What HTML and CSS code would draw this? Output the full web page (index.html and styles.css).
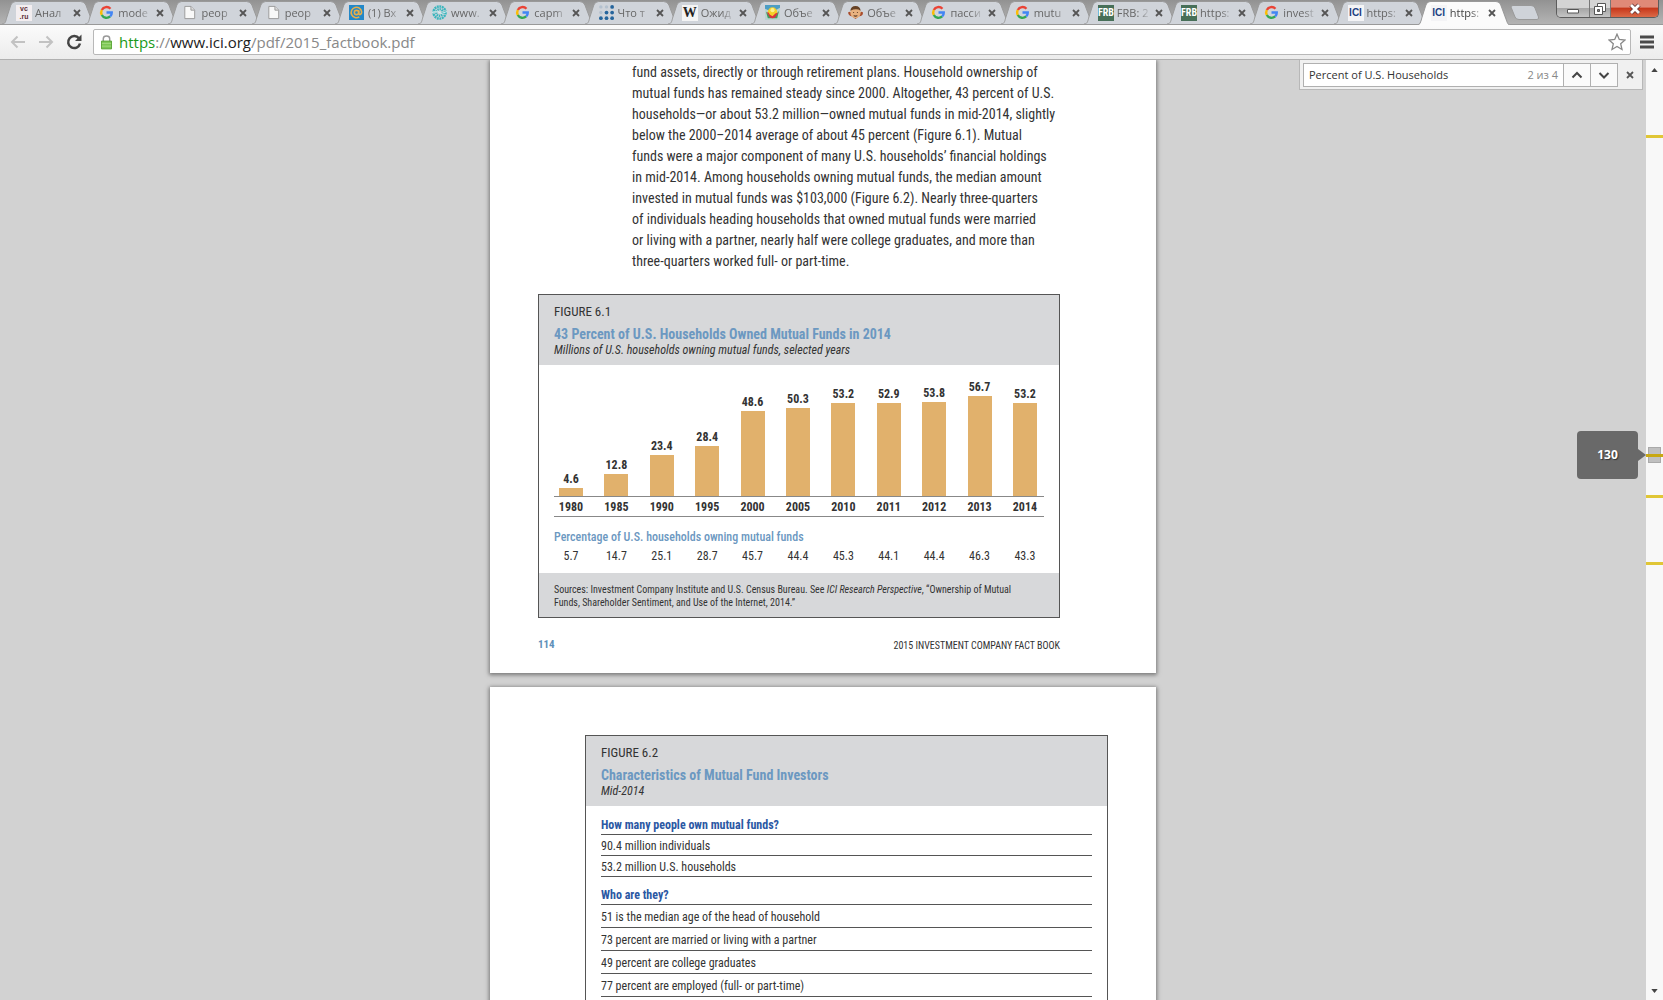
FILE: index.html
```html
<!DOCTYPE html>
<html lang="en">
<head>
<meta charset="utf-8">
<title>2015_factbook.pdf</title>
<link rel="stylesheet" href="styles.css">
</head>
<body>
<svg class="defs" aria-hidden="true">
  <symbol id="shape" viewBox="0 0 95 24" preserveAspectRatio="none"><path d="M0 24C4 24 4 20 5 17L9 5Q10.500 1.500 14 1.500H80Q84 1.500 85.500 5L91 19Q92.500 24 95 24"/></symbol>
  <symbol id="close" viewBox="0 0 10 10"><path d="M2 2L8 8M8 2L2 8" stroke="#555" stroke-width="1.800"/></symbol>
  <symbol id="google" viewBox="0 0 16 16"><g fill="none" stroke-width="2.600"><path d="M3 5.300A5.700 5.700 0 0 1 12.200 4" stroke="#ea4335"/><path d="M3 5.300A5.700 5.700 0 0 0 3 10.700" stroke="#fbbc05"/><path d="M3 10.700A5.700 5.700 0 0 0 11.900 12.200" stroke="#34a853"/><path d="M11.900 12.200Q13.700 10.500 13.600 8H8" stroke="#4285f4"/></g></symbol>
  <symbol id="file" viewBox="0 0 16 16"><path d="M3 1.500H9.500L13.500 5.500V14.500H3Z" fill="#f8f8f8" stroke="#999"/><path d="M9.500 1.500V5.500H13.500" fill="#ddd" stroke="#999"/></symbol>
  <symbol id="mail" viewBox="0 0 16 16"><path d="M0 0H16V16H0Z" fill="#2388c8"/><g fill="none" stroke="#e8ae48" stroke-width="1.700"><circle cx="8" cy="8" r="2.300"/><path d="M10.400 5.500V9Q10.700 10.500 12 10.200Q13.600 9.500 13.500 7.500A5.600 5.600 0 1 0 11 12.700"/></g></symbol>
  <symbol id="burst" viewBox="0 0 16 16"><g fill="none" stroke="#38b5bd"><circle cx="8" cy="8" r="6.500" stroke-width="2.600" stroke-dasharray="2 .7"/><circle cx="8" cy="8" r="3.500" stroke-width="2.400" stroke-dasharray="1.500 .8"/></g><path d="M0 8L6 7L10 9L16 7" stroke="#d8eef0" fill="none"/></symbol>
  <symbol id="dots" viewBox="0 0 16 16"><g fill="#b4c1ce"><circle cx="2" cy="2" r="1.800"/><circle cx="8" cy="2" r="1.800"/><circle cx="2" cy="8" r="1.800"/></g><g fill="#26659c"><circle cx="14" cy="2" r="2"/><circle cx="8" cy="8" r="2"/><circle cx="14" cy="8" r="2"/><circle cx="2" cy="14" r="2"/><circle cx="8" cy="14" r="2"/><circle cx="14" cy="14" r="2"/></g></symbol>
  <symbol id="ball" viewBox="0 0 16 16"><path d="M0 0H16V16H0Z" fill="#4c9dc4"/><path d="M0 4Q8 9 16 3V16H0Z" fill="#b9d3cf"/><path d="M1 7Q6 13 8 13T15 6L13 14H3Z" fill="#3f9d5c"/><circle cx="8" cy="7.500" r="5" fill="#f4cf27"/><path d="M2 8Q4 7 5 10L8 12L11 9L14 8L11 13Q8 15 5 13Z" fill="#d8343a"/><circle cx="8" cy="5.500" r="2.200" fill="#fbf08a"/></symbol>
  <symbol id="face" viewBox="0 0 16 16"><path d="M0 8Q3 6 4 9H12Q14 6 16 8Q16 12 12 12L8 15L4 12Q1 12 0 8" fill="#a94c2b"/><ellipse cx="8" cy="8" rx="5.500" ry="6" fill="#e8b27f"/><path d="M2.500 6Q3 1 8 1T13.500 6Q9 3 2.500 6" fill="#654125"/><path d="M5.500 8H6.500M9.500 8H10.500M6 11.500Q8 12.500 10 11.500" stroke="#573420"/></symbol>
</svg>

<header class="browser">
  <div class="strip">
    <div class="tabs" role="tablist">
      <div class="tab"><svg class="shape"><use href="#shape"/></svg><span class="fav vc"><span>vc</span><span>.ru</span></span><button class="label">Анал</button><button class="close" aria-label="Close"><svg><use href="#close"/></svg></button></div>
      <div class="tab"><svg class="shape"><use href="#shape"/></svg><svg class="fav"><use href="#google"/></svg><button class="label">mode</button><button class="close" aria-label="Close"><svg><use href="#close"/></svg></button></div>
      <div class="tab"><svg class="shape"><use href="#shape"/></svg><svg class="fav"><use href="#file"/></svg><button class="label">peop</button><button class="close" aria-label="Close"><svg><use href="#close"/></svg></button></div>
      <div class="tab"><svg class="shape"><use href="#shape"/></svg><svg class="fav"><use href="#file"/></svg><button class="label">peop</button><button class="close" aria-label="Close"><svg><use href="#close"/></svg></button></div>
      <div class="tab"><svg class="shape"><use href="#shape"/></svg><svg class="fav"><use href="#mail"/></svg><button class="label">(1) Вх</button><button class="close" aria-label="Close"><svg><use href="#close"/></svg></button></div>
      <div class="tab"><svg class="shape"><use href="#shape"/></svg><svg class="fav"><use href="#burst"/></svg><button class="label">www.</button><button class="close" aria-label="Close"><svg><use href="#close"/></svg></button></div>
      <div class="tab"><svg class="shape"><use href="#shape"/></svg><svg class="fav"><use href="#google"/></svg><button class="label">capm</button><button class="close" aria-label="Close"><svg><use href="#close"/></svg></button></div>
      <div class="tab"><svg class="shape"><use href="#shape"/></svg><svg class="fav"><use href="#dots"/></svg><button class="label">Что т</button><button class="close" aria-label="Close"><svg><use href="#close"/></svg></button></div>
      <div class="tab"><svg class="shape"><use href="#shape"/></svg><span class="fav wiki">W</span><button class="label">Ожид</button><button class="close" aria-label="Close"><svg><use href="#close"/></svg></button></div>
      <div class="tab"><svg class="shape"><use href="#shape"/></svg><svg class="fav"><use href="#ball"/></svg><button class="label">Объе</button><button class="close" aria-label="Close"><svg><use href="#close"/></svg></button></div>
      <div class="tab"><svg class="shape"><use href="#shape"/></svg><svg class="fav"><use href="#face"/></svg><button class="label">Объе</button><button class="close" aria-label="Close"><svg><use href="#close"/></svg></button></div>
      <div class="tab"><svg class="shape"><use href="#shape"/></svg><svg class="fav"><use href="#google"/></svg><button class="label">пасси</button><button class="close" aria-label="Close"><svg><use href="#close"/></svg></button></div>
      <div class="tab"><svg class="shape"><use href="#shape"/></svg><svg class="fav"><use href="#google"/></svg><button class="label">mutu</button><button class="close" aria-label="Close"><svg><use href="#close"/></svg></button></div>
      <div class="tab"><svg class="shape"><use href="#shape"/></svg><span class="fav frb">FRB</span><button class="label">FRB: 2</button><button class="close" aria-label="Close"><svg><use href="#close"/></svg></button></div>
      <div class="tab"><svg class="shape"><use href="#shape"/></svg><span class="fav frb">FRB</span><button class="label">https:</button><button class="close" aria-label="Close"><svg><use href="#close"/></svg></button></div>
      <div class="tab"><svg class="shape"><use href="#shape"/></svg><svg class="fav"><use href="#google"/></svg><button class="label">invest</button><button class="close" aria-label="Close"><svg><use href="#close"/></svg></button></div>
      <div class="tab"><svg class="shape"><use href="#shape"/></svg><span class="fav ici">ICI</span><button class="label">https:</button><button class="close" aria-label="Close"><svg><use href="#close"/></svg></button></div>
      <div class="tab active"><svg class="shape"><use href="#shape"/></svg><span class="fav ici">ICI</span><button class="label">https:</button><button class="close" aria-label="Close"><svg><use href="#close"/></svg></button></div>
    </div>
    <button class="newtab" aria-label="New tab"><svg viewBox="0 0 30 16"><path d="M1 2Q1 .5 3 .5H21Q24 .5 25 3L28.500 12Q29 14.500 27 14.500H9Q6 14.500 5 12Z" fill="#cfd3d9" stroke="#999"/></svg></button>
    <div class="window">
      <button class="min" aria-label="Minimize"><svg viewBox="0 0 14 14"><path d="M1.500 7.500H12.500V11H1.500Z" fill="#fff" stroke="#555"/></svg></button>
      <button class="max" aria-label="Restore"><svg viewBox="0 0 14 14"><path d="M4.500 1.500H12.500V9.500H4.500Z" fill="#fff" stroke="#555"/><path d="M1.500 4.500H9.500V12.500H1.500Z" fill="#fff" stroke="#555"/><path d="M4.500 7.500H6.500V9.500H4.500Z" fill="#888" stroke="#555"/></svg></button>
      <button class="exit" aria-label="Close window"><svg viewBox="0 0 14 14"><path d="M3 3L11 11M11 3L3 11" stroke="#633" stroke-width="4.500"/><path d="M3 3L11 11M11 3L3 11" stroke="#fff" stroke-width="2.800"/></svg></button>
    </div>
  </div>
  <div class="toolbar">
    <button class="nav" aria-label="Back"><svg viewBox="0 0 18 18"><path d="M16 9H3M8.500 3.500L3 9L8.500 14.500" fill="none" stroke="#c2c2c2" stroke-width="2"/></svg></button>
    <button class="nav" aria-label="Forward"><svg viewBox="0 0 18 18"><path d="M2 9H15M9.500 3.500L15 9L9.500 14.500" fill="none" stroke="#c2c2c2" stroke-width="2"/></svg></button>
    <button class="nav" aria-label="Reload"><svg viewBox="0 0 18 18"><path d="M14 5.500A6 6 0 1 0 15 10.500" fill="none" stroke="#444" stroke-width="2.500"/><path d="M16.500 1.500V8H10Z" fill="#444"/></svg></button>
    <div class="omnibox">
      <svg class="lock" viewBox="0 0 12 16"><path d="M2.500 8V4.500Q2.500 1.500 6 1.500T9.500 4.500V8" fill="none" stroke="#999" stroke-width="1.600"/><path d="M.5 7H11.500V15.500H.5Z" fill="#7cc653" stroke="#55a030"/><path d="M1 9.500H11M1 12.500H11" stroke="#a5dc83"/></svg>
      <a class="url" href="https://www.ici.org/pdf/2015_factbook.pdf"><span class="secure">https</span>://<span class="host">www.ici.org</span>/pdf/2015_factbook.pdf</a>
      <button class="star" aria-label="Bookmark"><svg viewBox="0 0 18 18"><path d="M9 1.200L11.300 6.500L17 7L12.700 10.800L14 16.500L9 13.500L4 16.500L5.300 10.800L1 7L6.700 6.500Z" fill="#fff" stroke="#888" stroke-width="1.300"/></svg></button>
    </div>
    <button class="menu" aria-label="Menu"><svg viewBox="0 0 14 14"><path d="M0 2H14M0 7H14M0 12H14" stroke="#4a4a4a" stroke-width="3"/></svg></button>
  </div>
</header>

<main class="viewer">
  <div class="document">
    <section class="page first">
      <p class="prose">fund assets, directly or through retirement plans. Household ownership of<br>mutual funds has remained steady since 2000. Altogether, 43 percent of U.S.<br>households—or about 53.2 million—owned mutual funds in mid-2014, slightly<br>below the 2000–2014 average of about 45 percent (Figure 6.1). Mutual<br>funds were a major component of many U.S. households’ financial holdings<br>in mid-2014. Among households owning mutual funds, the median amount<br>invested in mutual funds was $103,000 (Figure 6.2). Nearly three-quarters<br>of individuals heading households that owned mutual funds were married<br>or living with a partner, nearly half were college graduates, and more than<br>three-quarters worked full- or part-time.</p>
      <figure class="figure">
        <figcaption class="caption">
          <div class="number">FIGURE 6.1</div>
          <h2>43 Percent of U.S. Households Owned Mutual Funds in 2014</h2>
          <div class="subtitle">Millions of U.S. households owning mutual funds, selected years</div>
        </figcaption>
        <div class="chart">
          <div class="cols bars">
            <div class="col">4.6<i style="height:8px"></i></div>
            <div class="col">12.8<i style="height:22px"></i></div>
            <div class="col">23.4<i style="height:41px"></i></div>
            <div class="col">28.4<i style="height:50px"></i></div>
            <div class="col">48.6<i style="height:85px"></i></div>
            <div class="col">50.3<i style="height:88px"></i></div>
            <div class="col">53.2<i style="height:93px"></i></div>
            <div class="col">52.9<i style="height:93px"></i></div>
            <div class="col">53.8<i style="height:94px"></i></div>
            <div class="col">56.7<i style="height:100px"></i></div>
            <div class="col">53.2<i style="height:93px"></i></div>
          </div>
          <div class="cols years"><span class="col">1980</span><span class="col">1985</span><span class="col">1990</span><span class="col">1995</span><span class="col">2000</span><span class="col">2005</span><span class="col">2010</span><span class="col">2011</span><span class="col">2012</span><span class="col">2013</span><span class="col">2014</span></div>
          <h3>Percentage of U.S. households owning mutual funds</h3>
          <div class="cols shares"><span class="col">5.7</span><span class="col">14.7</span><span class="col">25.1</span><span class="col">28.7</span><span class="col">45.7</span><span class="col">44.4</span><span class="col">45.3</span><span class="col">44.1</span><span class="col">44.4</span><span class="col">46.3</span><span class="col">43.3</span></div>
        </div>
        <p class="sources">Sources: Investment Company Institute and U.S. Census Bureau. See <em>ICI Research Perspective</em>, “Ownership of Mutual<br>Funds, Shareholder Sentiment, and Use of the Internet, 2014.”</p>
      </figure>
      <footer class="folio"><b>114</b><span>2015 INVESTMENT COMPANY FACT BOOK</span></footer>
    </section>
    <section class="page second">
      <figure class="figure">
        <figcaption class="caption">
          <div class="number">FIGURE 6.2</div>
          <h2>Characteristics of Mutual Fund Investors</h2>
          <div class="subtitle">Mid-2014</div>
        </figcaption>
        <div class="facts">
          <h3>How many people own mutual funds?</h3>
          <ul class="tight"><li>90.4 million individuals</li><li>53.2 million U.S. households</li></ul>
          <h3>Who are they?</h3>
          <ul><li>51 is the median age of the head of household</li><li>73 percent are married or living with a partner</li><li>49 percent are college graduates</li><li>77 percent are employed (full- or part-time)</li></ul>
        </div>
      </figure>
    </section>
  </div>

  <div class="scrollbar">
    <svg class="up" viewBox="0 0 8 5"><path d="M0 5L4 0L8 5Z"/></svg>
    <span class="thumb"></span>
    <span class="mark m1"></span><span class="mark m2"></span><span class="mark m3"></span><span class="mark m4"></span>
    <svg class="down" viewBox="0 0 8 5"><path d="M0 0L4 5L8 0Z"/></svg>
  </div>
  <div class="bubble">130</div>
  <form class="find">
    <div class="field"><input type="text" aria-label="Find in page" value="Percent of U.S. Households"><span>2 из 4</span></div>
    <button type="button" class="step" aria-label="Previous"><svg viewBox="0 0 12 12"><path d="M1.500 8.500L6 4L10.500 8.500"/></svg></button>
    <button type="button" class="step" aria-label="Next"><svg viewBox="0 0 12 12"><path d="M1.500 4L6 8.500L10.500 4"/></svg></button>
    <button type="button" class="dismiss" aria-label="Close find bar"><svg><use href="#close"/></svg></button>
  </form>
</main>
</body>
</html>
```

FILE: styles.css
```css
* { box-sizing: border-box; }
html, body { height: 100%; }
body {
  margin: 0;
  display: flex;
  flex-direction: column;
  overflow: hidden;
  background: #d2d2d2;
  color: #333;
  font-family: "Roboto Condensed", Roboto, "Liberation Sans", sans-serif;
}
button { padding: 0; border: 0; background: none; font: inherit; color: inherit; }
svg { display: block; }
.defs { position: absolute; width: 0; height: 0; }
h2, h3, p, figure, ul { margin: 0; padding: 0; }

/* tab strip */
.browser { flex: none; font-family: "Open Sans", "Noto Sans", sans-serif; }
.strip {
  display: flex;
  height: 25px;
  padding-left: 2px;
  background: linear-gradient(#929292, #b4b4b4);
  border-bottom: 1px solid #999;
}
.tabs { display: flex; flex: 0 1 1498px; min-width: 0; }
.tab {
  position: relative;
  flex: 1 1 0;
  min-width: 0;
  height: 25px;
  display: flex;
  align-items: center;
  gap: 3px;
  padding-left: 14px;
  font-size: 11px;
  color: #666;
}
.shape {
  position: absolute;
  left: 0;
  top: 0;
  width: calc(100% + 10px);
  height: 24px;
  fill: #d0d4da;
  stroke: #999;
}
.active { z-index: 1; color: #444; }
.active .shape { fill: #fbfbfb; height: 25px; }
.fav { position: relative; flex: none; width: 16px; height: 16px; }
svg.fav { width: 15px; height: 15px; margin-right: 1px; }
.label {
  position: relative;
  flex: 0 0 34px;
  text-align: left;
  white-space: nowrap;
  line-height: 20px;
  mask-image: linear-gradient(90deg, #000 60%, transparent);
}
.close { position: relative; flex: none; }
.close svg, .dismiss svg { width: 10px; height: 10px; }
.vc { display: flex; flex-direction: column; align-items: center; background: #f3eef0; color: #5c3038; font: 700 7px/8px "Liberation Sans", sans-serif; }
.wiki { background: #f4f4f4; color: #222; font: 700 14px/16px "Liberation Serif", serif; text-align: center; }
.frb { background: #476f58; color: #fff; font: 700 10px/15px "Roboto Condensed", sans-serif; text-align: center; }
.ici { background: #f4f4f6; color: #1d3f82; font: 700 10px/16px "Liberation Sans", sans-serif; text-align: center; }
.newtab { width: 30px; height: 16px; margin: 5px 0 0 10px; }
.newtab svg { width: 30px; height: 16px; }
.window {
  display: flex;
  height: 18px;
  margin: 0 4px 0 auto;
  border: 1px solid #5c5c5c;
  border-top: 0;
  border-radius: 0 0 5px 5px;
  overflow: hidden;
}
.window button { display: grid; place-items: center; background: linear-gradient(#d4d4d4 45%, #a6a6a6 50%, #c4c4c4); border-right: 1px solid #777; }
.window svg { width: 14px; height: 14px; }
.window .min { width: 33px; }
.window .max { width: 21px; }
.window .exit { width: 47px; border: 0; background: linear-gradient(#e08a78 40%, #c7391c 50%, #dc6a48); }

/* toolbar */
.toolbar {
  display: flex;
  align-items: center;
  height: 35px;
  padding: 0 9px;
  background: linear-gradient(#fbfbfb, #ececec);
  border-bottom: 1px solid #b0b0b0;
}
.nav { width: 18px; height: 18px; margin-right: 10px; }
.omnibox {
  flex: 1;
  display: flex;
  align-items: center;
  height: 26px;
  margin: 0 9px 0 0;
  padding: 0 4px 0 7px;
  background: #fff;
  border: 1px solid #b8b8b8;
  border-radius: 2px;
}
.lock { width: 11px; height: 16px; margin-right: 7px; }
.url { flex: 1; font-size: 15px; line-height: 20px; color: #888; text-decoration: none; }
.secure { color: #1a9a1a; }
.host { color: #222; }
.star, .star svg { width: 18px; height: 18px; }
.menu { width: 14px; height: 14px; }

/* document */
.viewer { position: relative; flex: 1; min-height: 0; display: flex; overflow: hidden; }
.document { flex: 1; display: flex; flex-direction: column; align-items: center; gap: 14px; overflow: hidden; }
.page { flex: none; width: 666px; background: #fff; box-shadow: 0 1px 4px 1px #777; }
.first { padding: 0 96px 17px 48px; }
.second { padding: 48px 48px 48px 95px; }
.prose { padding: 2px 0 22px 94px; font-size: 14px; line-height: 21px; white-space: nowrap; }
.figure { border: 1px solid #555; }
.caption { height: 70px; padding: 8px 15px 0; background: #d7d8da; }
.number { font-size: 13px; line-height: 18px; }
h2 { padding-top: 3px; font-size: 14px; line-height: 20px; color: #6c98c1; white-space: nowrap; }
.subtitle { font-size: 12px; line-height: 13px; font-style: italic; white-space: nowrap; }
.chart { padding: 0 15px; }
.cols { display: flex; justify-content: space-between; padding-right: 2px; }
.col { flex: 0 0 34px; text-align: center; font-size: 12px; line-height: 18px; }
.bars { height: 132px; align-items: flex-end; font-weight: 700; border-bottom: 1px solid #888; }
.bars i { display: block; width: 24px; margin: 0 auto; background: #e1b16c; }
.years { height: 20px; padding-top: 1px; font-weight: 700; border-bottom: 1px solid #888; }
.chart h3 { padding-top: 11px; font-size: 12px; font-weight: 500; line-height: 18px; color: #6c98c1; }
.shares { height: 27px; padding-top: 1px; }
.sources { height: 44px; padding: 10px 15px 0; background: #d7d8da; font-size: 10px; line-height: 13px; white-space: nowrap; }
.folio { display: flex; justify-content: space-between; padding-top: 18px; font-size: 10px; line-height: 20px; }
.folio b { font-size: 11px; line-height: 18px; color: #5f8fb9; }
.facts { padding: 8px 15px 24px; font-size: 12px; }
.facts h3, .facts li { padding-top: 2px; border-bottom: 1px solid #555; }
.facts h3 { font-size: 12px; line-height: 18px; color: #2b58a3; }
.facts ul { list-style: none; }
.facts li { line-height: 20px; }
.facts .tight { padding-bottom: 7px; }
.facts .tight li { line-height: 18px; }

/* overlays */
.scrollbar { position: relative; flex: 0 0 17px; background: #f8f8f8; }
.scrollbar svg { position: absolute; left: 5px; width: 7px; height: 4px; fill: #444; }
.scrollbar .up { top: 8px; }
.scrollbar .down { bottom: 7px; }
.thumb { position: absolute; left: 2px; top: 387px; width: 13px; height: 16px; background: #c0c0c0; border: 1px solid #aaa; }
.mark { position: absolute; left: 0; width: 17px; height: 3px; background: #e0c636; }
.m1 { top: 75px; }
.m2 { top: 394px; background: #c8a812; }
.m3 { top: 435px; }
.m4 { top: 502px; }
.bubble {
  position: absolute;
  right: 25px;
  top: 371px;
  width: 61px;
  height: 48px;
  border-radius: 4px;
  background: #696969;
  color: #fff;
  font: 700 12px/47px "Open Sans", sans-serif;
  text-align: center;
  text-shadow: 1px 1px 1px #333;
}
.bubble::after { content: ""; position: absolute; left: 61px; top: 18px; border: 6px solid transparent; border-left: 8px solid #696969; border-right: 0; }
.find {
  position: absolute;
  right: 20px;
  top: 0;
  display: flex;
  align-items: center;
  height: 30px;
  padding: 0 7px 0 3px;
  background: #f0f0f0;
  border: 1px solid #b8b8b8;
  border-top: 0;
  font: 11px "Open Sans", sans-serif;
}
.field { display: flex; align-items: center; width: 261px; height: 24px; padding: 0 5px; background: #fff; border: 1px solid #b0b0b0; color: #888; }
.field input { flex: 1; min-width: 0; padding: 0; border: 0; outline: 0; font: inherit; color: #333; }
.step { display: grid; place-items: center; width: 27px; height: 24px; background: #fafafa; border: 1px solid #b0b0b0; border-left: 0; }
.step svg { width: 12px; height: 12px; fill: none; stroke: #444; stroke-width: 2; }
.dismiss { margin-left: 7px; }
```
